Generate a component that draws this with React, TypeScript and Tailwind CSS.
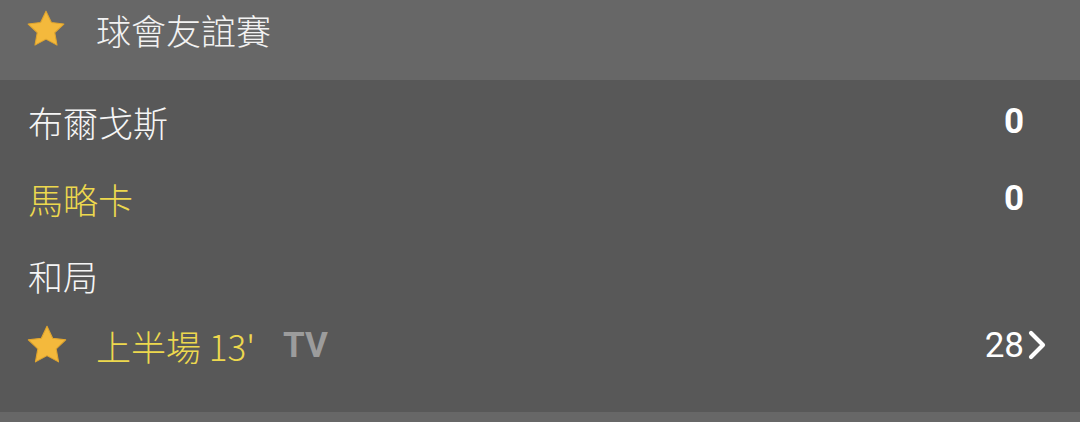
import React from 'react'

const Star = ({ size }: { size: number }) => (
    <svg width={size} height={size} viewBox="0 0 24 24" className="shrink-0">
        <path
            d="M12 1.8l3.1 6.5 7.1.9-5.2 4.9 1.3 7.1L12 17.8l-6.3 3.4 1.3-7.1-5.2-4.9 7.1-.9z"
            fill="#F4B93C"
            stroke="#E0A52E"
            strokeWidth="0.6"
            strokeLinejoin="round"
        />
    </svg>
)

const Chevron = () => (
    <svg width="20" height="30" viewBox="0 0 20 30" className="ml-[3px] -mr-[23px] shrink-0">
        <path d="M4 3l12 12-12 12" fill="none" stroke="#FFFFFF" strokeWidth="4.2" strokeLinecap="round" strokeLinejoin="round" />
    </svg>
)

const cjk = "font-['Noto_Sans_CJK_TC','Noto_Sans',sans-serif] font-light"
const num = "font-['Roboto','Liberation_Sans',sans-serif]"

export default function App() {
    return (
        <div className="w-[1080px] h-[422px] overflow-hidden bg-[#585858]">
            <header className="bg-[#676767] h-[80px] pb-[22px]">
                <div className="flex items-center h-[58px] pl-[25px] gap-[29px]">
                    <Star size={42} />
                    <h1 className={`${cjk} text-[35px] leading-none text-[#F2F2F2]`}>球會友誼賽</h1>
                </div>
            </header>

            <section className="bg-[#585858] h-[332px] pl-[28px] pr-[56px] pt-[3px]">
                <div className="flex items-center justify-between h-[76px]">
                    <span className={`${cjk} text-[35px] leading-none text-[#F5F5F5]`}>布爾戈斯</span>
                    <span className={`${num} text-[35px] font-bold leading-none text-white`}>0</span>
                </div>
                <div className="flex items-center justify-between h-[78px]">
                    <span className={`${cjk} text-[35px] leading-none text-[#EDD84E]`}>馬略卡</span>
                    <span className={`${num} text-[35px] font-bold leading-none text-white`}>0</span>
                </div>
                <div className="flex items-center h-[76px]">
                    <span className={`${cjk} text-[35px] leading-none text-[#F5F5F5]`}>和局</span>
                </div>
                <div className="flex items-center justify-between h-[60px] pt-[4px]">
                    <div className="flex items-center -ml-[3px]">
                        <Star size={44} />
                        <span className={`${cjk} ml-[27px] text-[35px] leading-none text-[#EDD84E]`}>上半場 13'</span>
                        <span className={`${num} ml-[28px] text-[35px] font-bold leading-none text-[#9C9C9C]`}>TV</span>
                    </div>
                    <div className="flex items-center">
                        <span className={`${num} text-[35px] leading-none text-white`}>28</span>
                        <Chevron />
                    </div>
                </div>
            </section>

            <div className="h-[10px] bg-[#676767]" />
        </div>
    )
}
